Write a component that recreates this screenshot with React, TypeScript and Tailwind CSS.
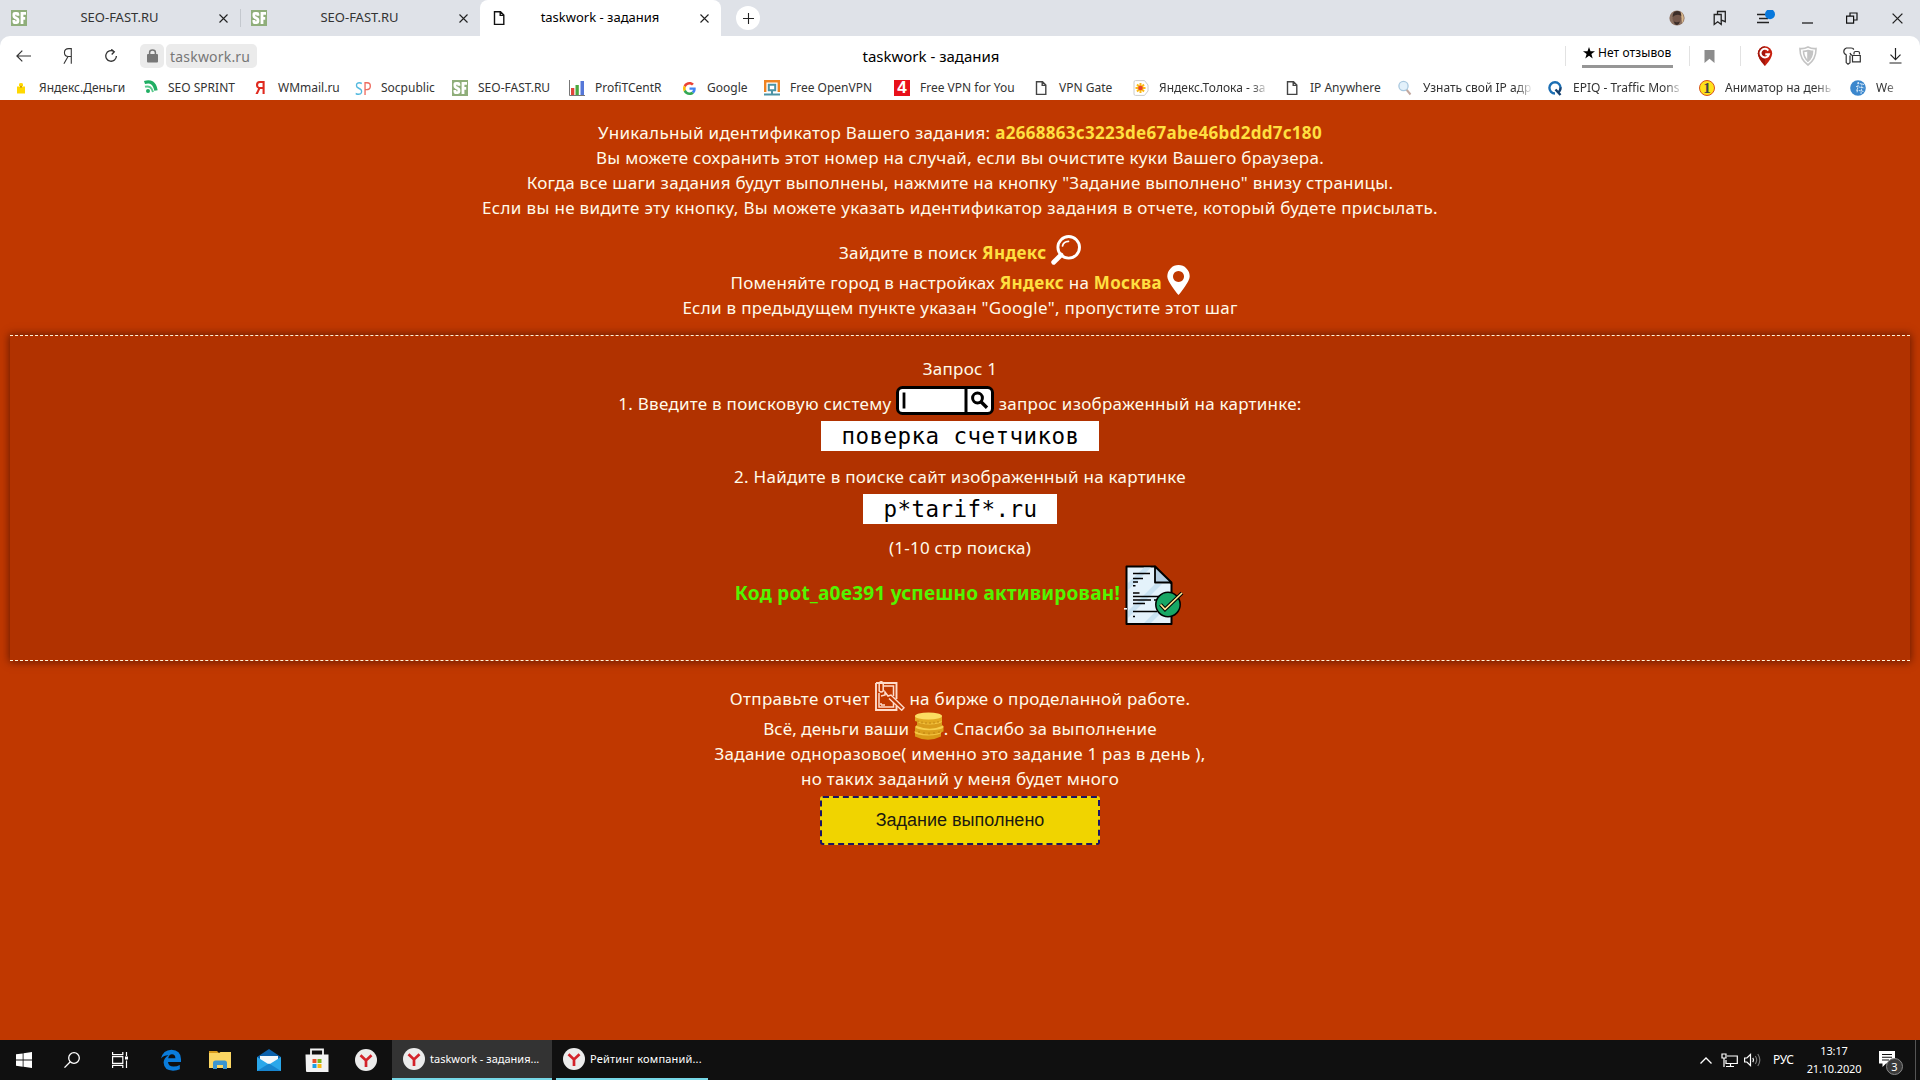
import type { ReactNode } from "react";

function SfIcon() {
  return (
    <svg viewBox="0 0 16 16" className="h-4 w-4">
      <path d="M0 0h16v16H0z" fill="#8fae7a" />
      <g fill="none" stroke="#fff" strokeWidth="2.8">
        <path d="M6.9 5.800V4.200Q6.900 3.400 6 3.400H4Q2.900 3.400 2.900 4.400V6Q2.900 6.900 3.900 7.400L5.900 8.500Q6.900 9 6.900 9.800V11.600Q6.900 12.600 5.900 12.600H4Q2.900 12.600 2.900 11.600V10" />
        <path d="M15 3.400H11V14M11 8.300H14.200" />
      </g>
    </svg>
  );
}

function FileIcon({ color }: { color: string }) {
  return (
    <svg viewBox="0 0 16 16" className="h-4 w-4" fill="none" stroke={color} strokeWidth="1.4">
      <path d="M3.5 1.7h6l3.3 3.4v9.3H3.5zM9.2 1.7v3.7h3.6" />
    </svg>
  );
}

function Cross({ className = "h-[9px] w-[9px]" }: { className?: string }) {
  return (
    <svg viewBox="0 0 9 9" className={className} stroke="#222" strokeWidth="1.1">
      <path d="M.5.5l8 8M8.500.5l-8 8" />
    </svg>
  );
}

function GoogleG() {
  return (
    <svg viewBox="0 0 48 48" className="h-[13px] w-[13px]">
      <path fill="#EA4335" d="M24 9.5c3.54 0 6.71 1.22 9.21 3.6l6.85-6.85C35.9 2.38 30.47 0 24 0 14.62 0 6.51 5.38 2.56 13.22l7.98 6.19C12.43 13.72 17.74 9.5 24 9.5z" />
      <path fill="#4285F4" d="M46.98 24.55c0-1.57-.15-3.09-.38-4.55H24v9.02h12.94c-.58 2.96-2.26 5.48-4.78 7.18l7.73 6c4.51-4.18 7.09-10.36 7.09-17.65z" />
      <path fill="#FBBC05" d="M10.53 28.59A14.5 14.5 0 0 1 9.77 24c0-1.6.27-3.14.76-4.59l-7.98-6.19A24 24 0 0 0 0 24c0 3.88.92 7.54 2.56 10.78l7.97-6.19z" />
      <path fill="#34A853" d="M24 48c6.48 0 11.93-2.13 15.89-5.81l-7.73-6c-2.15 1.45-4.92 2.3-8.16 2.3-6.26 0-11.57-4.22-13.47-9.91l-7.98 6.19C6.51 42.62 14.62 48 24 48z" />
    </svg>
  );
}

function Tab({ icon, label, active = false }: { icon: ReactNode; label: string; active?: boolean }) {
  return (
    <div
      className={
        active
          ? "flex h-9 w-[241px] items-center rounded-t-[8px] bg-white pr-[12px] pl-[11px]"
          : "flex h-9 w-[240px] items-center pr-3 pl-[11px]"
      }
    >
      {icon}
      <span className={active ? "flex-1 pr-[7px] text-center text-black" : "flex-1 pr-[7px] text-center text-[#333]"}>{label}</span>
      <Cross />
    </div>
  );
}

function Bookmark({ width, icon, label, fade = "" }: { width: string; icon: ReactNode; label: string; fade?: string }) {
  return (
    <div className={`flex shrink-0 items-center ${width}`}>
      <span className="mr-[10px] flex h-4 w-4 shrink-0 items-center justify-center">{icon}</span>
      <span className={`whitespace-nowrap ${fade}`}>{label}</span>
    </div>
  );
}

const FADE = "w-[110px] [mask-image:linear-gradient(to_right,#000_84%,transparent)]";

function Browser() {
  return (
    <header className="h-[100px] bg-[#dfe2e8] font-['Noto_Sans',sans-serif]">
      <div className="flex h-9 items-center text-[13px]">
        <Tab icon={<SfIcon />} label="SEO-FAST.RU" />
        <div className="-mr-px h-[18px] w-px bg-[#c4c8ce]" />
        <Tab icon={<SfIcon />} label="SEO-FAST.RU" />
        <Tab active icon={<FileIcon color="#111" />} label="taskwork - задания" />
        <div className="ml-[15px] flex h-6 w-6 items-center justify-center rounded-full bg-white">
          <svg viewBox="0 0 11 11" className="h-[11px] w-[11px]" stroke="#222" strokeWidth="1.1">
            <path d="M5.5 0v11M0 5.5h11" />
          </svg>
        </div>
        <div className="ml-auto flex items-center">
          <svg viewBox="0 0 16 16" className="mr-[27px] h-4 w-4">
            <circle cx="8" cy="8" r="7.6" fill="#8b7060" />
            <path d="M12 1.5q5 5 1 12z" fill="#d9b88c" />
            <ellipse cx="7.8" cy="8.2" rx="4.3" ry="6" fill="#74574a" />
            <path d="M3.6 7q0-6 4.4-6t4.2 5Q8 3 3.6 7zM5 11.5q3 1.4 5.6 0-.4 3.4-2.8 3.4T5 11.5z" fill="#3d2e29" />
          </svg>
          <svg viewBox="0 0 16 16" className="mr-[27px] h-4 w-4" fill="none" stroke="#222" strokeWidth="1.3">
            <path d="M2.2 4.5h7v10L5.7 11.8 2.2 14.5zM5.5 4.3V1.5h7.8v10.2l-3.8-1.5" />
          </svg>
          <svg viewBox="0 0 20 16" className="mr-[27px] h-4 w-5">
            <path d="M2 4.5h10M4 8.500h9M2 12.500h12" stroke="#222" strokeWidth="1.4" />
            <circle cx="15" cy="4.2" r="5" fill="#0878dc" />
          </svg>
          <svg viewBox="0 0 11 11" className="mr-[33px] h-[11px] w-[11px]" stroke="#111" strokeWidth="1.2">
            <path d="M0 10h11" />
          </svg>
          <svg viewBox="0 0 12 12" className="mr-[34px] h-3 w-3" fill="none" stroke="#111" strokeWidth="1.2">
            <path d="M.6 4.2h7v7h-7zM4 4V1h7v7H8" />
          </svg>
          <Cross className="mr-[17px] h-[11px] w-[11px]" />
        </div>
      </div>

      <div className="h-16 rounded-t-[10px] bg-white">
        <div className="flex h-10 items-center">
          <div className="flex w-[640px] items-center">
            <svg viewBox="0 0 15 12" className="ml-[16px] h-3 w-[15px]" fill="none" stroke="#333" strokeWidth="1.2">
              <path d="M15 6H1M6.3.6L.9 6l5.4 5.4" />
            </svg>
            <svg viewBox="0 0 10 18" className="ml-[32px] h-[18px] w-[9px]" fill="none" stroke="#333" strokeWidth="1.2">
              <path d="M9.2 17.5V.8H6.4Q1.6.8 1.6 5.2T6 9.6h3.2M5.6 9.6L1 17.5" />
            </svg>
            <svg viewBox="0 0 14 14" className="ml-[32px] h-[14px] w-[14px]" fill="none" stroke="#333" strokeWidth="1.3">
              <path d="M9.8 2.4a5.3 5.3 0 1 0 2.6 4.5M7.3.3l3 2.4-2.6 2.8" />
            </svg>
            <div className="ml-[22px] flex h-6 w-[24px] items-center justify-center rounded-[5px] bg-[#ebebeb]">
              <svg viewBox="0 0 11 14" className="h-[14px] w-[11px]">
                <rect y="5" width="11" height="8.6" rx="1" fill="#777" />
                <path d="M2.6 6V3.4Q2.6 1 5.5 1t2.9 2.4V6" fill="none" stroke="#777" strokeWidth="1.5" />
              </svg>
            </div>
            <div className="ml-[2px] flex h-6 w-[91px] items-center rounded-[5px] bg-[#ebebeb] pl-1 text-[14px] tracking-[0.2px] text-[#777]">
              taskwork.ru
            </div>
          </div>
          <div className="flex w-[582px] justify-center text-[15px] text-black">
            <span>taskwork - задания</span>
          </div>
          <div className="ml-auto flex items-center">
            <div className="h-5 w-px bg-[#e2e2e2]" />
            <div className="ml-[16px] box-content flex h-[16px] w-[91px] items-center border-b-[3px] border-[#969696] pb-[4px] text-[12px] tracking-[0.1px] text-black">
              <svg viewBox="0 0 12 12" className="mr-[3px] ml-[1px] h-3 w-3 shrink-0">
                <path d="M6 0l1.5 4.2H12L8.4 6.9 9.7 11.4 6 8.7 2.3 11.4 3.6 6.9 0 4.2h4.5z" fill="#000" />
              </svg>
              <span className="whitespace-nowrap">Нет отзывов</span>
            </div>
            <div className="ml-[16px] h-5 w-px bg-[#e2e2e2]" />
            <svg viewBox="0 0 10 13" className="ml-[14px] h-[13px] w-[11px]">
              <path d="M0 0h10v13L5 8.8 0 13z" fill="#8c8c8c" />
            </svg>
            <div className="ml-[25px] h-5 w-px bg-[#e2e2e2]" />
            <svg viewBox="0 0 16 20" className="ml-[16px] h-5 w-4">
              <path d="M8 20Q1 12.500 .8 7.500A7.200 7.200 0 0 1 15.200 7.500Q15 12.500 8 20z" fill="#c7200f" />
              <path d="M8 20Q1 12.500 .8 7.500A7.200 7.200 0 0 1 8 .3z" fill="#a3160c" />
              <path d="M11.300 4.600A4.300 4.300 0 1 0 12 8.300H8.300" fill="none" stroke="#fff" strokeWidth="2" />
            </svg>
            <svg viewBox="0 0 18 20" className="ml-[26px] h-5 w-[18px]" fill="none" stroke="#c4c4c4" strokeWidth="1.6">
              <path d="M9 1Q13 3 17 2.500 17.300 13 9 19 .7 13 1 2.500 5 3 9 1z" />
              <path d="M9 4.500q2.500 1 4.500.8Q13.500 11.500 9 15 4.500 11.500 4.500 5.300 7 5.300 9 4.500z" />
              <path d="M9 5v9.500q3.500-3 4-8.500z" fill="#c4c4c4" />
            </svg>
            <svg viewBox="0 0 18 18" className="ml-[26px] h-[18px] w-[18px]" fill="none" stroke="#333" strokeWidth="1.2">
              <path d="M3.200 7.600Q.8 6.800.8 4.400T3.400 1H8q2.600 0 2.600 1.800M3.200 7.600v8L5 17.200l2-1.600V8.500" />
              <path d="M11 7.500V6q0-1.500 1.500-1.500H15q1.500 0 1.500 1.500v1.500M9.500 8.500h7.800v6.300H9.500zM9.500 8.500q-2-.5-2.500-2.500" />
            </svg>
            <svg viewBox="0 0 13 16" className="mr-[17px] ml-[28px] h-4 w-[13px]" fill="none" stroke="#222" strokeWidth="1.2">
              <path d="M6.500 0v11.500M1.500 6.700l5 5 5-5M.5 15h12" />
            </svg>
            <div className="w-px" />
          </div>
        </div>

        <nav className="flex h-6 items-center overflow-hidden pl-[13px] text-[12px] leading-6 text-[#333]">
          <Bookmark
            width="w-[129px]"
            label="Яндекс.Деньги"
            icon={
              <svg viewBox="0 0 16 16" className="h-4 w-4">
                <path d="M4 6.500h8v7H4z" fill="#ffd800" />
                <path d="M6 6V4.300q0-1.300 2-1.300t2 1.300V6" fill="#ffd800" />
                <circle cx="8" cy="6.800" r="1" fill="#c8900a" />
              </svg>
            }
          />
          <Bookmark
            width="w-[110px]"
            label="SEO SPRINT"
            icon={
              <svg viewBox="0 0 16 16" className="h-4 w-4" fill="none" stroke="#1fae63" strokeWidth="2">
                <path d="M2.500 2.500Q12-.5 14 10.500" strokeWidth="3.400" />
                <path d="M3 6.800q6-1.800 8 5.200" stroke="#5bc98e" />
                <circle cx="6" cy="11" r="2" fill="#1fae63" stroke="none" />
              </svg>
            }
          />
          <Bookmark width="w-[103px]" label="WMmail.ru" icon={<span className="scale-x-[0.8] font-['Liberation_Sans'] text-[18px] font-bold text-[#e02a1f]">Я</span>} />
          <Bookmark
            width="w-[97px]"
            label="Socpublic"
            icon={
              <span className="flex scale-x-[0.8] font-['Noto_Sans'] text-[18px] text-[#53b9df]">
                S<span className="text-[#ee6b5f]">P</span>
              </span>
            }
          />
          <Bookmark width="w-[117px]" label="SEO-FAST.RU" icon={<SfIcon />} />
          <Bookmark
            width="w-[112px]"
            label="ProfiTCentR"
            icon={
              <svg viewBox="0 0 16 16" className="h-4 w-4">
                <path d="M.5 0v15.500H16" fill="none" stroke="#777" />
                <path d="M2 8h3.300v7H2z" fill="#e0453a" />
                <path d="M6.500 5h3.300v10H6.500z" fill="#4ba83f" />
                <path d="M11.500 1h3.500v14h-3.500z" fill="#5577d8" />
              </svg>
            }
          />
          <Bookmark width="w-[83px]" label="Google" icon={<GoogleG />} />
          <Bookmark
            width="w-[130px]"
            label="Free OpenVPN"
            icon={
              <svg viewBox="0 0 16 16" className="h-4 w-4" fill="none" strokeWidth="2.400">
                <path d="M1.200 12V1.200h13.600V12" stroke="#ee8322" />
                <path d="M4.800 4.700h6.400v5.600H4.800zM8 10v4.600M0 14.600h16" stroke="#4c93a5" strokeWidth="2" />
              </svg>
            }
          />
          <Bookmark
            width="w-[139px]"
            label="Free VPN for You"
            icon={<span className="flex h-4 w-4 items-center justify-center bg-[#e8101a] font-['Liberation_Sans'] text-[17px] leading-4 font-bold text-white">4</span>}
          />
          <Bookmark width="w-[100px]" label="VPN Gate" icon={<FileIcon color="#444" />} />
          <Bookmark
            width="w-[151px]"
            label="Яндекс.Толока - за"
            fade={FADE}
            icon={
              <svg viewBox="0 0 16 16" className="h-4 w-4">
                <path d="M2.500.6h9L15 5v6l-3.500 4.400h-9Q1 15.400 1 14V2Q1 .6 2.500.6z" fill="#fff" stroke="#ccc" />
                <path d="M7.500 3v10M2.500 8h10M4 4.500l7 7M11 4.500l-7 7" stroke="#fbb917" strokeWidth="2" />
                <circle cx="7.500" cy="8" r="2.300" fill="#e8432d" />
              </svg>
            }
          />
          <Bookmark width="w-[113px]" label="IP Anywhere" icon={<FileIcon color="#444" />} />
          <Bookmark
            width="w-[150px]"
            label="Узнать свой IP адр"
            fade={FADE}
            icon={
              <svg viewBox="0 0 16 16" className="h-4 w-4">
                <path d="M9 9l4.500 5.500" stroke="#c3a9a0" strokeWidth="2" />
                <circle cx="6.500" cy="6" r="4.600" fill="#e3f1fb" stroke="#a9c8df" strokeWidth="1.300" />
              </svg>
            }
          />
          <Bookmark
            width="w-[152px]"
            label="EPIQ - Traffic Mons"
            fade={FADE}
            icon={
              <svg viewBox="0 0 16 16" className="h-4 w-4" fill="none" strokeWidth="2.400">
                <path d="M8 13.500A5.600 5.600 0 1 1 13.600 8" stroke="#1c6fb4" />
                <path d="M13.600 7.500Q13.500 11 11 12.600M8.500 9.500l5 5.500" stroke="#15406f" />
              </svg>
            }
          />
          <Bookmark
            width="w-[151px]"
            label="Аниматор на день"
            fade="w-[109px] [mask-image:linear-gradient(to_right,#000_84%,transparent)]"
            icon={
              <span className="flex h-4 w-4 items-center justify-center rounded-full border border-[#d8541c] bg-[#ffe21a] font-['Liberation_Serif'] text-[15px] leading-4 font-bold text-[#444]">
                1
              </span>
            }
          />
          <Bookmark
            width="w-[60px]"
            label="We"
            fade="w-[20px] [mask-image:linear-gradient(to_right,#000_50%,#0006)]"
            icon={
              <svg viewBox="0 0 16 16" className="h-4 w-4">
                <circle cx="8" cy="8" r="7.800" fill="#3b87cd" />
                <path d="M7 3l7 1.500M6 6.500l8.500 1.500M6 10l8 1.500M8.500 2L7 13M12 3.500L11 14" stroke="#d5e8f8" strokeWidth="1" strokeDasharray="2 .8" />
              </svg>
            }
          />
        </nav>
      </div>
    </header>
  );
}

function Hl({ children }: { children: ReactNode }) {
  return <b className="font-bold tracking-[0.300px] text-[#ffe041]">{children}</b>;
}

function Row({ children }: { children: ReactNode }) {
  return <div className="flex h-[30px] items-end justify-center whitespace-pre">{children}</div>;
}

function Line({ children, tracking = "" }: { children: ReactNode; tracking?: string }) {
  return <div className={`h-[25px] whitespace-pre ${tracking}`}>{children}</div>;
}

function TaskPage() {
  return (
    <main className="h-[940px] overflow-hidden bg-[#c03800] px-[10px] pt-5 text-center font-['Noto_Sans',sans-serif] text-[17px] leading-[25px] tracking-[0.26px] text-[#fffbea]">
      <Line tracking="tracking-[0.320px]">
        Уникальный идентификатор Вашего задания: <Hl>a2668863c3223de67abe46bd2dd7c180</Hl>
      </Line>
      <Line>Вы можете сохранить этот номер на случай, если вы очистите куки Вашего браузера.</Line>
      <Line>Когда все шаги задания будут выполнены, нажмите на кнопку "Задание выполнено" внизу страницы.</Line>
      <Line tracking="tracking-[0.330px]">
        Если вы не видите эту кнопку, Вы можете указать идентификатор задания в отчете, который будете присылать.
      </Line>

      <div className="mt-[15px]">
        <Row>
          <span>
            Зайдите в поиск <Hl>Яндекс</Hl>{" "}
          </span>
          <svg viewBox="0 0 30 30" className="h-[30px] w-[30px]" fill="none" stroke="#fff" strokeLinecap="round">
            <circle cx="17.700" cy="12.300" r="10.800" strokeWidth="2.900" />
            <path d="M10 20L2.700 27.300" strokeWidth="4.800" />
            <path d="M11.500 11Q12.500 6.500 17.500 6.300" strokeWidth="1.700" />
          </svg>
        </Row>
        <Row>
          <span>
            Поменяйте город в настройках <Hl>Яндекс</Hl> на <Hl>Москва</Hl>{" "}
          </span>
          <svg viewBox="0 0 23 30" className="h-[30px] w-[23px]">
            <path fillRule="evenodd" fill="#fff" d="M11.500 30Q9.500 28 5 21.500.3 14.700.3 11.300a11.200 11.200 0 0 1 22.400 0Q22.700 14.700 18 21.500 13.500 28 11.500 30zM11.500 6a5.500 5.500 0 1 0 .01 0z" />
          </svg>
        </Row>
        <Line tracking="tracking-[0.280px]">Если в предыдущем пункте указан "Google", пропустите этот шаг</Line>
      </div>

      <section className="mt-[15px] h-[326px] border-y border-dashed border-[#fff3d8] bg-[#b13200] pt-5 shadow-[0_0_8px_1px_rgba(60,10,0,0.65)]">
        <Line>Запрос 1</Line>
        <div className="mt-[5px]">
          <Row>
            <span>1. Введите в поисковую систему </span>
            <svg viewBox="0 0 98 29" className="mb-px h-[29px] w-[98px]" fill="#fff" stroke="#000">
              <rect x="1.500" y="1.500" width="95" height="26" rx="5" strokeWidth="3" />
              <path d="M70 1v27" strokeWidth="3" />
              <path d="M8 6.500v16" strokeWidth="2.800" />
              <circle cx="81.500" cy="12" r="4.900" strokeWidth="3" />
              <path d="M85 15.800l6 6" strokeWidth="3.400" />
            </svg>
            <span> запрос изображенный на картинке:</span>
          </Row>
        </div>
        <div className="mx-auto mt-[5px] h-[30px] w-[278px] bg-white pl-px font-['DejaVu_Sans_Mono',monospace] text-[22.500px] leading-[31px] tracking-[0.450px] text-black">поверка счетчиков</div>
        <div className="mt-[13px]">
          <Line>2. Найдите в поиске сайт изображенный на картинке</Line>
        </div>
        <div className="mx-auto mt-[5px] h-[30px] w-[194px] bg-white pl-px font-['DejaVu_Sans_Mono',monospace] text-[22.500px] leading-[31px] tracking-[0.450px] text-black">p*tarif*.ru</div>
        <div className="mt-[11px]">
          <Line>(1-10 стр поиска)</Line>
        </div>
        <div className="mt-[5px] flex h-[60px] items-start justify-center whitespace-pre">
          <b className="pt-[16px] text-[19px] tracking-[0.220px] text-[#53f500]">Код pot_a0e391 успешно активирован! </b>
          <svg viewBox="0 0 60 60" className="mr-px -ml-px h-[60px] w-[60px]">
            <path d="M2.500 1.500H31L47.500 18.500V59H2.500z" fill="#e4f2fb" stroke="#000" strokeWidth="2" strokeLinejoin="round" />
            <path d="M4 18L20 2.500h7L4 25zM4 46L31 19h7L4 53zM20 58l26-26v7L27 58z" fill="#c9e2f2" />
            <path d="M31 1.500V17.500H47.500z" fill="#b5cfe3" stroke="#000" strokeWidth="1.800" strokeLinejoin="round" />
            <path d="M9 8.500h17M9 13.500h10M9 17h5M9 20.800h2.500M9 28h6.500M9 31.500h27M9 35h18M30 35h4M9 38.500h12M9 46.500h24M9 51.500h2" stroke="#000" strokeWidth="1.500" />
            <path d="M0 43.800h3" stroke="#fff" strokeWidth="1.500" />
            <circle cx="44" cy="39.500" r="12.200" fill="#17a765" stroke="#000" strokeWidth="1.500" />
            <path d="M36.500 39.500L41 44.300 58 28" fill="none" stroke="#000" strokeWidth="3.800" />
            <path d="M36.500 39.500L41 44.300 58 28" fill="none" stroke="#ffe993" strokeWidth="1.700" />
          </svg>
        </div>
      </section>

      <div className="mt-5">
        <Row>
          <span className="tracking-[0.330px]">Отправьте отчет </span>
          <svg viewBox="0 0 30 30" className="h-[30px] w-[30px]" fill="none" stroke="#ffdccb" strokeWidth="1.500">
            <path d="M1 2h20.500v16M1 2v27h20.500v-4" strokeWidth="1.900" />
            <path d="M4 12V26h14.500v-4M8.500 5H18.500v10" />
            <path d="M4.200 10V3Q4.200.7 6.200.7T8.200 3v7Q6.200 12 4.200 10z" />
            <path d="M6 15l4-1v-3l3 4 3-1 13 12.800-2.300 2.400L14 17.500M6 22v2M6 24h4" />
          </svg>
          <span> на бирже о проделанной работе.</span>
        </Row>
        <Row>
          <span className="tracking-[0.120px]">Всё, деньги ваши </span>
          <svg viewBox="0 0 30 30" className="h-[30px] w-[30px]">
            <path d="M1 21q13 6 26 0v4.500q-13 6.500-26 0z" fill="#d99a17" />
            <ellipse cx="14" cy="21" rx="13.500" ry="3.600" fill="#f5c643" />
            <path d="M1 15.500h28.500v5q-14 6-28.500 0z" fill="#dba01d" />
            <ellipse cx="15.500" cy="15.700" rx="14" ry="3.600" fill="#f7ce4c" />
            <path d="M3 10h25v5q-12 5.500-25 0z" fill="#d99c1b" />
            <ellipse cx="15.500" cy="10" rx="12.500" ry="3.600" fill="#f5c643" />
            <path d="M1 5h27v5q-13 5.500-27 0z" fill="#e2a922" />
            <ellipse cx="14.500" cy="5" rx="13.500" ry="3.600" fill="#fbdc62" />
            <path d="M4 9.500v2M8 10.500v2M12 11v2M16 11v2M20 10.800v2M24 10v2M5 20v2M10 21v2M15 21.500v2M20 21v2M25 20v2" stroke="#b87b10" strokeWidth=".8" />
          </svg>
          <span className="tracking-[0.200px]">. Спасибо за выполнение</span>
        </Row>
        <Line>Задание одноразовое( именно это задание 1 раз в день ),</Line>
        <Line>но таких заданий у меня будет много</Line>
        <button className="mt-[5px] h-[49px] w-[280px] rounded-[3px] border-2 border-dashed border-[#1b1464] bg-[#f0d400] font-['Liberation_Sans',sans-serif] text-[18px] leading-[25px] tracking-normal text-[#1c1a10]">
          Задание выполнено
        </button>
      </div>
    </main>
  );
}

function YandexBrowserIcon() {
  return (
    <svg viewBox="0 0 22 22" className="h-[22px] w-[22px] shrink-0">
      <circle cx="11" cy="11" r="11" fill="#ececec" />
      <path d="M5.500 6.300L11 11.500 16.500 6.300M11 11v7" fill="none" stroke="#d3222a" strokeWidth="2.700" />
    </svg>
  );
}

function Cell({ width, children }: { width: string; children: ReactNode }) {
  return <div className={`flex h-10 items-center justify-center ${width}`}>{children}</div>;
}

function Taskbar() {
  return (
    <footer className="flex h-10 bg-[#101010] font-['Noto_Sans',sans-serif] text-[11px] text-white">
      <Cell width="w-12">
        <svg viewBox="0 0 16 16" className="h-4 w-4" fill="#fff">
          <path d="M0 2.300L6.700 1.400V7.600H0zM7.500 1.300L16 0V7.600H7.500zM0 8.400h6.700v6.300L0 13.800zM7.500 8.400H16V16l-8.500-1.200z" />
        </svg>
      </Cell>
      <Cell width="w-12">
        <svg viewBox="0 0 16 16" className="h-4 w-4" fill="none" stroke="#fff" strokeWidth="1.300">
          <circle cx="10" cy="6" r="5.300" />
          <path d="M6.300 9.800L.5 15.600" />
        </svg>
      </Cell>
      <Cell width="w-12">
        <svg viewBox="0 0 16 16" className="h-4 w-4" fill="none" stroke="#fff" strokeWidth="1.200">
          <path d="M.6 0v2.600h10.200V0M.6 16v-2.600h10.200V16M.6 4.600h10.200v6.800H.6zM14.500 0v4M14.500 8.500V16" />
          <path d="M13 4.500h3v3h-3z" fill="#fff" stroke="none" />
        </svg>
      </Cell>
      <div className="mr-px ml-[2px] flex">
        <Cell width="w-[49px]">
          <svg viewBox="0 0 22 22" className="h-[22px] w-[22px]">
            <path
              d="M1 9.500Q3 1 11.500.7 20.700.9 21 10v3H8Q8.500 17.600 13.500 17.600q3.500 0 6.300-1.600v4.300Q17 21.700 13 21.700 4 21.500 3.600 13.500 3.700 9 8.500 6.200 4 6 1 9.500zM8.200 9.300h7.200Q15.300 5.300 12 5.300 9 5.500 8.200 9.300z"
              fill="#0a7cdb"
            />
          </svg>
        </Cell>
        <Cell width="w-[49px]">
          <svg viewBox="0 0 22 18" className="h-[18px] w-[22px]">
            <path d="M0 0h8l2 2H0z" fill="#d99c1c" />
            <path d="M0 2h10l1.500-1H22v16H0z" fill="#fbd663" />
            <path d="M4 18v-6q0-2.500 2.500-2.500h9Q18 9.500 18 12v6h-4v-4H8v4z" fill="#3b95cf" />
          </svg>
        </Cell>
        <Cell width="w-[49px]">
          <svg viewBox="0 0 24 22" className="h-[22px] w-6">
            <path d="M0 8L12 0l12 8v3H0z" fill="#0c61ab" />
            <path d="M3 7h18v8H3z" fill="#f4f8fb" />
            <path d="M0 8l12 7.500L24 8v14H0z" fill="#2aa7ea" />
            <path d="M0 22L12 14.500 24 22z" fill="#1785cf" />
          </svg>
        </Cell>
        <Cell width="w-[48px]">
          <svg viewBox="0 0 24 24" className="h-6 w-6">
            <path d="M6 7V1.500h12V7" fill="none" stroke="#f3f3f3" strokeWidth="1.800" />
            <path d="M.5 6.500h23V24H2q-1 0-1-1z" fill="#f3f3f3" />
            <path d="M7.500 11h4v4h-4z" fill="#e9502b" />
            <path d="M12.500 11h4v4h-4z" fill="#7cb51c" />
            <path d="M7.500 16h4v4h-4z" fill="#1ba0e6" />
            <path d="M12.500 16h4v4h-4z" fill="#fbb810" />
          </svg>
        </Cell>
        <Cell width="w-[50px]">
          <YandexBrowserIcon />
        </Cell>
      </div>
      <div className="flex h-10 w-[160px] items-center gap-[5px] border-b-2 border-[#76d7e6] bg-[#333] pl-[11px]">
        <YandexBrowserIcon />
        <span className="pt-px whitespace-nowrap">taskwork - задания...</span>
      </div>
      <div className="ml-1 flex h-10 w-[152px] items-center gap-[5px] border-b-2 border-[#76d7e6] pl-[7px]">
        <YandexBrowserIcon />
        <span className="pt-px tracking-[0.180px] whitespace-nowrap">Рейтинг компаний...</span>
      </div>
      <div className="ml-auto flex items-center">
        <svg viewBox="0 0 12 7" className="h-[7px] w-3" fill="none" stroke="#fff" strokeWidth="1.300">
          <path d="M.5 6.500L6 1l5.500 5.500" />
        </svg>
        <svg viewBox="0 0 17 15" className="ml-[9px] h-[15px] w-[17px]" fill="none" stroke="#fff" strokeWidth="1.200">
          <path d="M6 3h10.300v7.500H5V7M5 13.500h8M9.500 10.500v3M1 1h4v4H1zM3 5v9" />
        </svg>
        <svg viewBox="0 0 17 14" className="ml-[6px] h-[14px] w-[17px]" fill="none" stroke="#fff" strokeWidth="1.200">
          <path d="M.6 5h2.300L6.500 1.500v11L2.900 9H.6zM8.800 4.800q1.500 2.200 0 4.400" />
          <path d="M11.300 3q2.800 4 0 8M13.800 1q4 6 0 12" stroke="#777" />
        </svg>
        <span className="ml-[12px] w-[22px] text-[12px] tracking-[-0.300px]">РУС</span>
        <div className="ml-[11px] flex w-[56px] flex-col items-center text-[11px] leading-[18px] tracking-[-0.150px]">
          <span>13:17</span>
          <span>21.10.2020</span>
        </div>
        <div className="relative ml-[17px] h-6 w-6">
          <svg viewBox="0 0 16 16" className="mt-[3px] h-4 w-4">
            <path d="M0 0h16v12.500H7L3.500 16v-3.500H0z" fill="#fff" />
            <path d="M3 3.500h10M3 6.200h10M3 9h7" stroke="#111" strokeWidth="1.100" />
          </svg>
          <span className="absolute top-[10px] left-[7px] flex h-[17px] w-[17px] items-center justify-center rounded-full border border-[#888] bg-[#3a3a3a] text-[11px] leading-none">3</span>
        </div>
        <div className="ml-[12px] h-10 w-px bg-[#555]" />
        <div className="w-1" />
      </div>
    </footer>
  );
}

export default function App() {
  return (
    <div className="h-[1080px] w-[1920px] overflow-hidden">
      <Browser />
      <TaskPage />
      <Taskbar />
    </div>
  );
}
